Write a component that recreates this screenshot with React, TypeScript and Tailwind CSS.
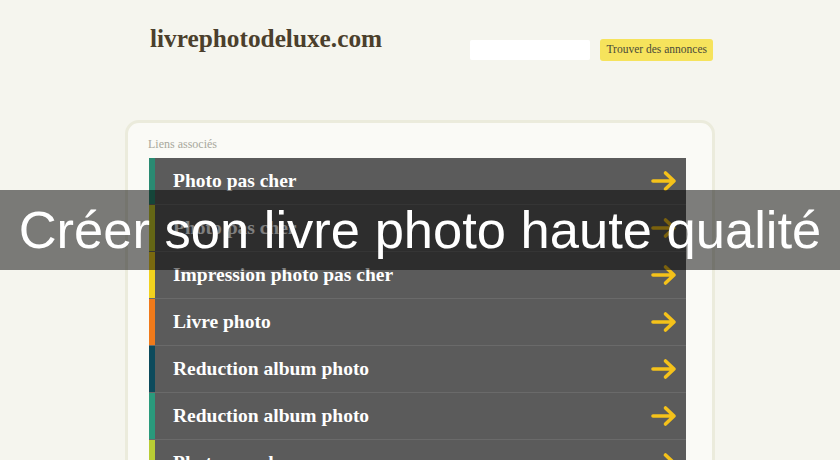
import React from 'react'

const links = [
  { label: 'Photo pas cher', color: '#2a8a72' },
  { label: 'Photo pas cher', color: '#c9cc2a' },
  { label: 'Impression photo pas cher', color: '#f2d21e' },
  { label: 'Livre photo', color: '#f07a1a' },
  { label: 'Reduction album photo', color: '#0c4a5c' },
  { label: 'Reduction album photo', color: '#2a9a7c' },
  { label: 'Photo pas cher', color: '#b8cc34' },
]

function Arrow() {
  return (
    <svg width="28" height="22" viewBox="0 0 28 22" fill="none">
      <path
        d="M3 11H24M15.5 3L24 11L15.5 19"
        stroke="#f5c21a"
        strokeWidth="3.6"
        strokeLinecap="round"
        strokeLinejoin="round"
      />
    </svg>
  )
}

export default function App() {
  return (
    <div className="relative w-[840px] h-[460px] overflow-hidden bg-[#f5f5ee] font-['Liberation_Serif',serif]">
      {/* Header */}
      <div className="w-[590px] mx-auto flex items-start pt-[26px] pl-[25px] pr-[2px]">
        <div className="text-[25.3px] font-bold text-[#4b3f2c] leading-none">
          livrephotodeluxe.com
        </div>
        <div className="ml-auto flex items-center gap-[10px] mt-[13px]">
          <div className="w-[120px] h-[20px] bg-white rounded-[2px]" />
          <div className="h-[22px] px-[6px] flex items-center bg-[#f6e35c] rounded-[3px] text-[11.5px] text-[#4a4a3a]">
            Trouver des annonces
          </div>
        </div>
      </div>

      {/* Card */}
      <div className="w-[590px] mx-auto mt-[59px] border-[3px] border-[#ebebdc] rounded-[14px] bg-[#fafaf6] pt-[15px] px-[21px] h-[400px]">
        <div className="text-[12px] text-[#a8a89c] leading-none mb-[8px] -ml-[1px]">Liens associés</div>
        <div className="w-[537px]">
          {links.map((l, i) => (
            <div key={i} className="flex h-[47px] bg-[#5b5b5b] border-b border-[#6a6a6a]">
              <div className="w-[6px] shrink-0" style={{ backgroundColor: l.color }} />
              <div className="flex-1 flex items-center pl-[18px] pr-[8px]">
                <span className="text-[19.5px] font-bold text-white">{l.label}</span>
                <span className="ml-auto">
                  <Arrow />
                </span>
              </div>
            </div>
          ))}
        </div>
      </div>

      {/* Overlay banner */}
      <div className="absolute left-0 right-0 top-[190px] h-[80px] bg-black/50 flex items-center justify-center">
        <span className="text-white text-[52.5px] font-['Liberation_Sans',Arial,sans-serif] leading-none">
          Créer son livre photo haute qualité
        </span>
      </div>
    </div>
  )
}
